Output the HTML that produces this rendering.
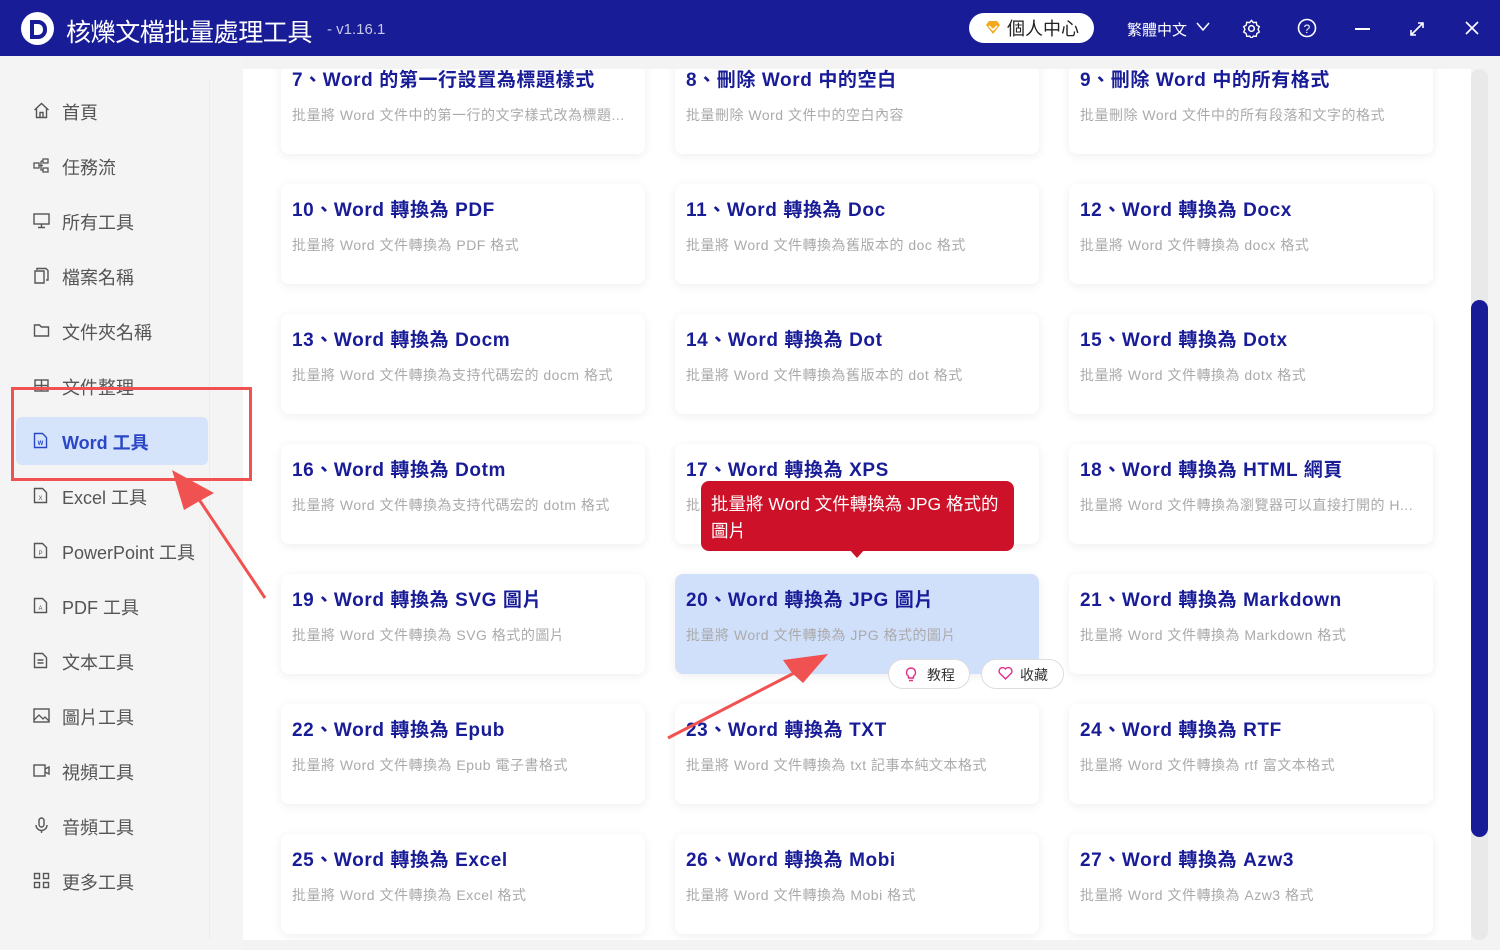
<!DOCTYPE html>
<html><head><meta charset="utf-8"><style>
*{margin:0;padding:0;box-sizing:border-box}
body{width:1500px;height:950px;overflow:hidden;background:#f3f3f3;font-family:"Liberation Sans","Noto Sans CJK TC",sans-serif;position:relative}
.hdr{position:absolute;left:0;top:0;width:1500px;height:56px;background:#191c97;color:#fff}
.logo{position:absolute;left:21px;top:12px;width:33px;height:33px;border-radius:50%;background:#fff}
.logo:after{content:"";position:absolute;left:9px;top:8px;width:9px;height:11px;border:4px solid #191c97;border-radius:0 9px 9px 0}
.title{position:absolute;left:66px;top:13px;font-size:25px;letter-spacing:-0.4px}
.ver{position:absolute;left:327px;top:21px;font-size:15px;color:#c8c9e8}
.pc{position:absolute;left:969px;top:13px;width:125px;height:30px;border-radius:15px;background:#fff;color:#222;font-size:18px;padding:2px 0 0 38px}
.pc svg{position:absolute;left:16px;top:8px}
.lang{position:absolute;left:1127px;top:19px;font-size:15px}
.side{position:absolute;left:0;top:56px;width:243px;height:894px;background:#f4f4f4}
.sidesep{position:absolute;left:209px;top:80px;width:1px;height:860px;background:#ececec}
.it{position:absolute;left:16px;width:192px;height:48px;font-size:18px;color:#555;padding:12px 0 0 46px}
.it svg{position:absolute;left:17px;top:15px}
.it.act{background:#d5e3fb;border-radius:6px;color:#2a47c8;font-weight:bold}
.main{position:absolute;left:243px;top:69px;width:1228px;height:871px;background:#fff;overflow:hidden}
.card{position:absolute;width:364px;height:100px;background:#fff;border-radius:8px;box-shadow:0 2px 10px rgba(0,0,0,.07)}
.card h3{position:absolute;left:11px;top:11px;font-size:19px;color:#191c97;font-weight:bold;white-space:nowrap;letter-spacing:0.6px}
.card p{position:absolute;left:11px;top:51px;font-size:14px;color:#aaa;white-space:nowrap;letter-spacing:0.5px}
.card.hl{background:#d0e0fb}
.scr{position:absolute;left:1471px;top:69px;width:17px;height:871px;background:#e9e9e9;border-radius:9px}
.thumb{position:absolute;left:1471px;top:300px;width:17px;height:537px;background:#191c97;border-radius:9px}
.tip{position:absolute;left:701px;top:481px;width:313px;height:70px;background:#cc1128;border-radius:8px;color:#fff;font-size:17.5px;padding:10px 10px;line-height:27px;white-space:nowrap}
.tip:after{content:"";position:absolute;left:148px;top:68px;border:8px solid transparent;border-top:9px solid #cc1128}
.btn{position:absolute;top:659px;height:30px;background:#fff;border:1px solid #ddd;border-radius:15px;font-size:14px;color:#333;padding:5px 0 0 38px}
.btn svg{position:absolute;left:16px;top:7px}
</style></head><body>
<div class="hdr">
<div class="logo"></div>
<div class="title">核爍文檔批量處理工具</div>
<div class="ver">- v1.16.1</div>
<div class="pc"><svg width="16" height="14" viewBox="0 0 16 14"><path d="M1 4L4 0h8l3 4-7 9z" fill="#f4a81c"/><path d="M4 5l4 4 4-4" stroke="#fff" stroke-width="1.6" fill="none"/></svg>個人中心</div>
<div class="lang">繁體中文</div>
<svg style="position:absolute;left:1196px;top:22px" width="14" height="10"><path d="M1 1l6 7 6-7" stroke="#fff" stroke-width="1.5" fill="none"/></svg>
<svg style="position:absolute;left:1242px;top:19px" width="19" height="19" viewBox="0 0 20 20"><circle cx="10" cy="10" r="3" stroke="#fff" stroke-width="1.6" fill="none"/><path d="M10 1.5l2 2.3 3-.3.6 3 2.6 1.6-1.3 2.8 1.3 2.8-2.6 1.6-.6 3-3-.3-2 2.3-2-2.3-3 .3-.6-3-2.6-1.6 1.3-2.8-1.3-2.8 2.6-1.6.6-3 3 .3z" stroke="#fff" stroke-width="1.5" fill="none"/></svg>
<svg style="position:absolute;left:1297px;top:18px" width="20" height="20"><circle cx="10" cy="10" r="8.5" stroke="#fff" stroke-width="1.6" fill="none"/><text x="10" y="15" font-size="12" fill="#fff" text-anchor="middle" font-family="Liberation Sans">?</text></svg>
<div style="position:absolute;left:1355px;top:28px;width:15px;height:2px;background:#fff"></div>
<svg style="position:absolute;left:1409px;top:21px" width="16" height="16"><path d="M2 14L14 2M9 2h5v5M2 9v5h5" stroke="#fff" stroke-width="1.6" fill="none"/></svg>
<svg style="position:absolute;left:1464px;top:20px" width="16" height="16"><path d="M2 2l12 12M14 2L2 14" stroke="#fff" stroke-width="1.7"/></svg>
</div>
<div class="side"></div>
<div class="sidesep"></div>
<div class="it" style="top:87px"><svg width="17" height="17" viewBox="0 0 17 17"><path d="M1.5 8L8.5 1.5 15.5 8M3.5 6.5V15.5h10V6.5M7 15.5v-5h3v5" stroke="#555" stroke-width="1.4" fill="none"/></svg>首頁</div>
<div class="it" style="top:142px"><svg width="17" height="17" viewBox="0 0 17 17"><rect x="1" y="6" width="5" height="5" stroke="#555" fill="none" stroke-width="1.3"/><rect x="10" y="2" width="5" height="4" stroke="#555" fill="none" stroke-width="1.3"/><rect x="10" y="11" width="5" height="4" stroke="#555" fill="none" stroke-width="1.3"/><path d="M6 8.5h4M8 4v9h2M8 4h2" stroke="#555" stroke-width="1.3" fill="none"/></svg>任務流</div>
<div class="it" style="top:197px"><svg width="17" height="17" viewBox="0 0 17 17"><rect x="1" y="2" width="15" height="10" stroke="#555" fill="none" stroke-width="1.4"/><path d="M5 15.5h7M8.5 12v3.5" stroke="#555" stroke-width="1.4"/></svg>所有工具</div>
<div class="it" style="top:252px"><svg width="17" height="17" viewBox="0 0 17 17"><path d="M4 3V1.5h9l2 2V13h-2M2 4h9v12H2z" stroke="#555" fill="none" stroke-width="1.4"/></svg>檔案名稱</div>
<div class="it" style="top:307px"><svg width="17" height="17" viewBox="0 0 17 17"><path d="M1.5 3h5l2 2h7v9h-14z" stroke="#555" fill="none" stroke-width="1.4"/></svg>文件夾名稱</div>
<div class="it" style="top:362px"><svg width="17" height="17" viewBox="0 0 17 17"><rect x="2" y="3" width="13" height="11" stroke="#555" fill="none" stroke-width="1.4"/><path d="M8.5 3v11M2 8.5h13" stroke="#555" stroke-width="1.4"/></svg>文件整理</div>
<div class="it act" style="top:417px"><svg width="15" height="17" viewBox="0 0 15 17"><path d="M1.5 1.5h8l4 4v10h-12z" stroke="#2a47c8" fill="none" stroke-width="1.4"/><text x="7.5" y="13" font-size="6" fill="#2a47c8" text-anchor="middle" font-family="Liberation Sans">W</text></svg>Word 工具</div>
<div class="it" style="top:472px"><svg width="15" height="17" viewBox="0 0 15 17"><path d="M1.5 1.5h8l4 4v10h-12z" stroke="#555" fill="none" stroke-width="1.4"/><text x="7.5" y="13" font-size="6" fill="#555" text-anchor="middle" font-family="Liberation Sans">X</text></svg>Excel 工具</div>
<div class="it" style="top:527px"><svg width="15" height="17" viewBox="0 0 15 17"><path d="M1.5 1.5h8l4 4v10h-12z" stroke="#555" fill="none" stroke-width="1.4"/><text x="7.5" y="13" font-size="6" fill="#555" text-anchor="middle" font-family="Liberation Sans">P</text></svg>PowerPoint 工具</div>
<div class="it" style="top:582px"><svg width="15" height="17" viewBox="0 0 15 17"><path d="M1.5 1.5h8l4 4v10h-12z" stroke="#555" fill="none" stroke-width="1.4"/><text x="7.5" y="13" font-size="6" fill="#555" text-anchor="middle" font-family="Liberation Sans">A</text></svg>PDF 工具</div>
<div class="it" style="top:637px"><svg width="15" height="17" viewBox="0 0 15 17"><path d="M1.5 1.5h8l4 4v10h-12zM4.5 8h6M4.5 11h6" stroke="#555" fill="none" stroke-width="1.4"/></svg>文本工具</div>
<div class="it" style="top:692px"><svg width="17" height="17" viewBox="0 0 17 17"><rect x="1" y="2" width="15" height="13" stroke="#555" fill="none" stroke-width="1.4"/><path d="M1 13l5-5 4 4 2-2 4 4" stroke="#555" fill="none" stroke-width="1.3"/></svg>圖片工具</div>
<div class="it" style="top:747px"><svg width="17" height="17" viewBox="0 0 17 17"><rect x="1" y="3" width="11" height="11" stroke="#555" fill="none" stroke-width="1.4"/><path d="M12 7l4-2v7l-4-2" stroke="#555" fill="none" stroke-width="1.4"/></svg>視頻工具</div>
<div class="it" style="top:802px"><svg width="17" height="17" viewBox="0 0 17 17"><rect x="6" y="1" width="5" height="9" rx="2.5" stroke="#555" fill="none" stroke-width="1.4"/><path d="M3 8a5.5 5.5 0 0011 0M8.5 13.5V16" stroke="#555" fill="none" stroke-width="1.4"/></svg>音頻工具</div>
<div class="it" style="top:857px"><svg width="17" height="17" viewBox="0 0 17 17"><rect x="1.5" y="1.5" width="5" height="5" stroke="#555" fill="none" stroke-width="1.4"/><rect x="10.5" y="1.5" width="5" height="5" stroke="#555" fill="none" stroke-width="1.4"/><rect x="1.5" y="10.5" width="5" height="5" stroke="#555" fill="none" stroke-width="1.4"/><rect x="10.5" y="10.5" width="5" height="5" stroke="#555" fill="none" stroke-width="1.4"/></svg>更多工具</div>

<div class="main">
<div class="card" style="left:38px;top:-15px"><h3>7、Word 的第一行設置為標題樣式</h3><p>批量將 Word 文件中的第一行的文字樣式改為標題...</p></div>
<div class="card" style="left:432px;top:-15px"><h3>8、刪除 Word 中的空白</h3><p>批量刪除 Word 文件中的空白內容</p></div>
<div class="card" style="left:826px;top:-15px"><h3>9、刪除 Word 中的所有格式</h3><p>批量刪除 Word 文件中的所有段落和文字的格式</p></div>

<div class="card" style="left:38px;top:115px"><h3>10、Word 轉換為 PDF</h3><p>批量將 Word 文件轉換為 PDF 格式</p></div>
<div class="card" style="left:432px;top:115px"><h3>11、Word 轉換為 Doc</h3><p>批量將 Word 文件轉換為舊版本的 doc 格式</p></div>
<div class="card" style="left:826px;top:115px"><h3>12、Word 轉換為 Docx</h3><p>批量將 Word 文件轉換為 docx 格式</p></div>

<div class="card" style="left:38px;top:245px"><h3>13、Word 轉換為 Docm</h3><p>批量將 Word 文件轉換為支持代碼宏的 docm 格式</p></div>
<div class="card" style="left:432px;top:245px"><h3>14、Word 轉換為 Dot</h3><p>批量將 Word 文件轉換為舊版本的 dot 格式</p></div>
<div class="card" style="left:826px;top:245px"><h3>15、Word 轉換為 Dotx</h3><p>批量將 Word 文件轉換為 dotx 格式</p></div>

<div class="card" style="left:38px;top:375px"><h3>16、Word 轉換為 Dotm</h3><p>批量將 Word 文件轉換為支持代碼宏的 dotm 格式</p></div>
<div class="card" style="left:432px;top:375px"><h3>17、Word 轉換為 XPS</h3><p>批量將 Word 文件轉換為 XPS 格式</p></div>
<div class="card" style="left:826px;top:375px"><h3>18、Word 轉換為 HTML 網頁</h3><p>批量將 Word 文件轉換為瀏覽器可以直接打開的 H...</p></div>

<div class="card" style="left:38px;top:505px"><h3>19、Word 轉換為 SVG 圖片</h3><p>批量將 Word 文件轉換為 SVG 格式的圖片</p></div>
<div class="card hl" style="left:432px;top:505px"><h3>20、Word 轉換為 JPG 圖片</h3><p>批量將 Word 文件轉換為 JPG 格式的圖片</p></div>
<div class="card" style="left:826px;top:505px"><h3>21、Word 轉換為 Markdown</h3><p>批量將 Word 文件轉換為 Markdown 格式</p></div>

<div class="card" style="left:38px;top:635px"><h3>22、Word 轉換為 Epub</h3><p>批量將 Word 文件轉換為 Epub 電子書格式</p></div>
<div class="card" style="left:432px;top:635px"><h3>23、Word 轉換為 TXT</h3><p>批量將 Word 文件轉換為 txt 記事本純文本格式</p></div>
<div class="card" style="left:826px;top:635px"><h3>24、Word 轉換為 RTF</h3><p>批量將 Word 文件轉換為 rtf 富文本格式</p></div>

<div class="card" style="left:38px;top:765px"><h3>25、Word 轉換為 Excel</h3><p>批量將 Word 文件轉換為 Excel 格式</p></div>
<div class="card" style="left:432px;top:765px"><h3>26、Word 轉換為 Mobi</h3><p>批量將 Word 文件轉換為 Mobi 格式</p></div>
<div class="card" style="left:826px;top:765px"><h3>27、Word 轉換為 Azw3</h3><p>批量將 Word 文件轉換為 Azw3 格式</p></div>
</div>
<div class="scr"></div><div class="thumb"></div>

<div class="btn" style="left:888px;width:82px"><svg width="12" height="15" viewBox="0 0 12 15"><path d="M6 1a4.5 4.5 0 00-2.5 8.2V11h5V9.2A4.5 4.5 0 006 1zM4 13.5h4" stroke="#e0308a" stroke-width="1.4" fill="none"/></svg>教程</div>
<div class="btn" style="left:981px;width:83px"><svg width="15" height="13" viewBox="0 0 15 13"><path d="M7.5 12L1.8 6.3A3.2 3.2 0 017.5 2a3.2 3.2 0 015.7 4.3z" stroke="#e0308a" stroke-width="1.4" fill="none"/></svg>收藏</div>

<div class="tip">批量將 Word 文件轉換為 JPG 格式的<br>圖片</div>

<div style="position:absolute;left:11px;top:387px;width:241px;height:94px;border:3px solid #f05252"></div>
<svg style="position:absolute;left:0;top:0" width="1500" height="950">
<path d="M265 598L190 486" stroke="#f05252" stroke-width="3"/>
<path d="M172 470L214 493 196 503 184 510z" fill="#f05252"/>
<path d="M668 738L800 670" stroke="#f05252" stroke-width="3"/>
<path d="M828 654L783 660 792 673 803 683z" fill="#f05252"/>
</svg>
</body></html>
